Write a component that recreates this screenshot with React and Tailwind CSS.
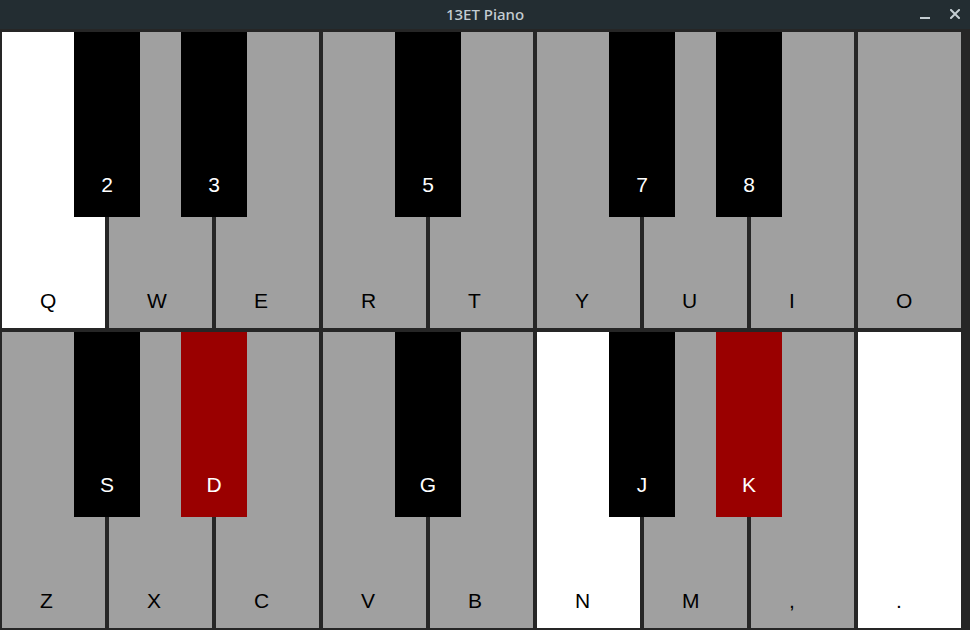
import React from "react";

const rows = [
  {
    keys: [
      { l: "Q", c: "w", b: { l: "2", c: "k" } },
      { l: "W", c: "g", b: { l: "3", c: "k" } },
      { l: "E", c: "g" },
      { l: "R", c: "g", b: { l: "5", c: "k" } },
      { l: "T", c: "g" },
      { l: "Y", c: "g", b: { l: "7", c: "k" } },
      { l: "U", c: "g", b: { l: "8", c: "k" } },
      { l: "I", c: "g" },
      { l: "O", c: "g" },
    ],
  },
  {
    keys: [
      { l: "Z", c: "g", b: { l: "S", c: "k" } },
      { l: "X", c: "g", b: { l: "D", c: "r" } },
      { l: "C", c: "g" },
      { l: "V", c: "g", b: { l: "G", c: "k" } },
      { l: "B", c: "g" },
      { l: "N", c: "w", b: { l: "J", c: "k" } },
      { l: "M", c: "g", b: { l: "K", c: "r" } },
      { l: ",", c: "g" },
      { l: ".", c: "w" },
    ],
  },
];

function WhiteKey({ k }) {
  const bg = k.c === "w" ? "bg-white" : "bg-[#a0a0a0]";
  return (
    <div className={`relative w-[103px] h-full ${bg} flex items-end pl-[38px] pb-[15px]`}>
      <span className="text-[21px] leading-[24px] text-black">{k.l}</span>
      {k.b && (
        <div
          className={`absolute left-[72px] top-0 z-10 w-[66px] h-[185px] flex items-end justify-center pb-[20px] ${
            k.b.c === "r" ? "bg-[#9a0000]" : "bg-black"
          }`}
        >
          <span className="text-[21px] leading-[24px] text-white">{k.b.l}</span>
        </div>
      )}
    </div>
  );
}

export default function App() {
  return (
    <div
      className="w-[970px] h-[630px] flex flex-col bg-[#262626] overflow-hidden"
      style={{ fontFamily: '"Liberation Sans", Arial, sans-serif' }}
    >
      <div className="relative h-[29px] shrink-0 bg-[#232d32] flex items-center justify-center">
        <span
          className="text-[15px] font-medium text-[#c4cdd2] leading-none"
          style={{ fontFamily: '"Noto Sans", sans-serif' }}
        >
          13ET Piano
        </span>
        <div className="absolute right-[10px] top-0 h-full flex items-center gap-[20px]">
          <svg width="10" height="10" viewBox="0 0 10 10" className="mb-[1px]">
            <rect x="0" y="8" width="10" height="2" fill="#c4cdd2" />
          </svg>
          <svg width="10" height="10" viewBox="0 0 10 10" className="mb-[1px]">
            <path d="M1 1 L9 9 M9 1 L1 9" stroke="#c4cdd2" strokeWidth="2" strokeLinecap="square" />
          </svg>
        </div>
      </div>
      <div className="flex-1 flex flex-col gap-[4px] pt-[3px] pl-[2px] pr-[9px] pb-[2px]">
        {rows.map((row, i) => (
          <div key={i} className="h-[296px] flex gap-[4px]">
            {row.keys.map((k, j) => (
              <WhiteKey key={j} k={k} />
            ))}
          </div>
        ))}
      </div>
    </div>
  );
}
